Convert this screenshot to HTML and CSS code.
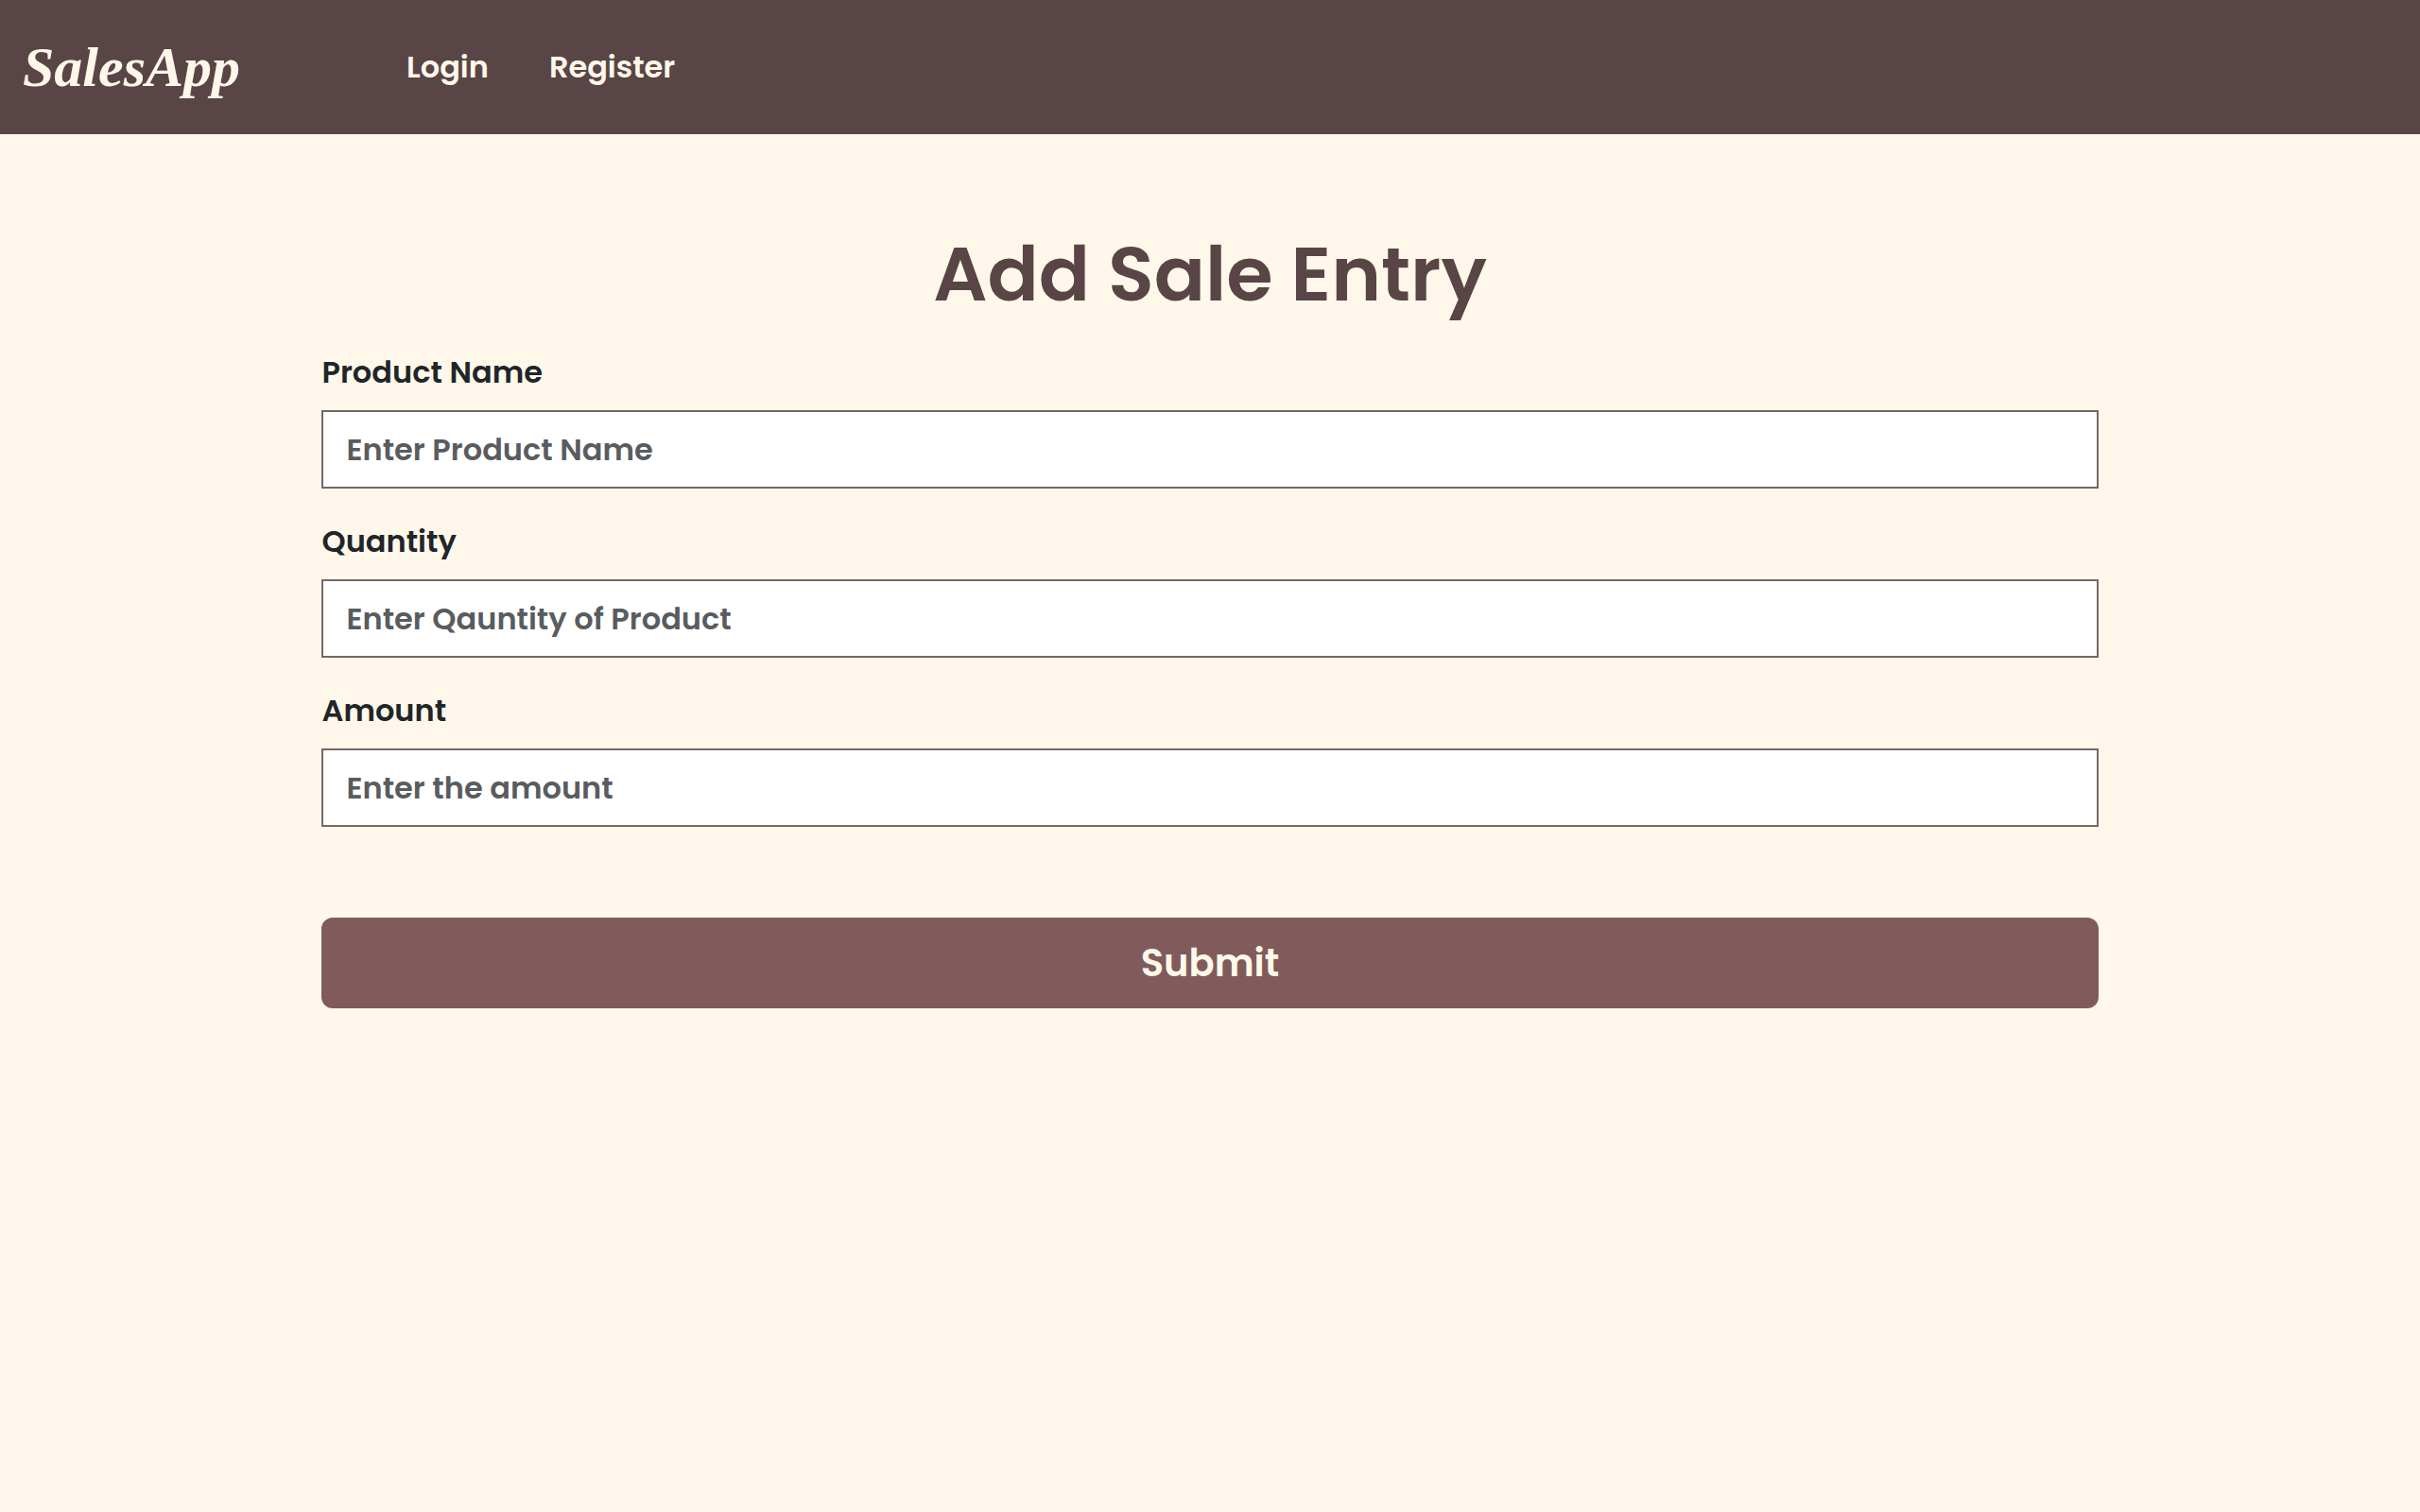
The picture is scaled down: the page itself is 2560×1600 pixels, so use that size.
FILE: index.html
```html
<!DOCTYPE html>
<html lang="en">
<head>
<meta charset="utf-8">
<meta name="viewport" content="width=device-width, initial-scale=1">
<title>SalesApp</title>
<link rel="stylesheet" href="styles.css">
</head>
<body>
<header class="navbar">
  <a class="brand" href="#">SalesApp</a>
  <nav class="nav-links">
    <a class="nav-link" href="#">Login</a>
    <a class="nav-link" href="#">Register</a>
  </nav>
</header>
<main class="container">
  <h1 class="title">Add Sale Entry</h1>
  <form class="form">
    <div class="field">
      <label class="label" for="product">Product Name</label>
      <input class="input" id="product" type="text" placeholder="Enter Product Name">
    </div>
    <div class="field">
      <label class="label" for="quantity">Quantity</label>
      <input class="input" id="quantity" type="text" placeholder="Enter Qauntity of Product">
    </div>
    <div class="field">
      <label class="label" for="amount">Amount</label>
      <input class="input" id="amount" type="text" placeholder="Enter the amount">
    </div>
    <button class="submit" type="submit">Submit</button>
  </form>
</main>
</body>
</html>
```
FILE: styles.css
```css
* {
  box-sizing: border-box;
}

body {
  margin: 0;
  background: #fff8ea;
  color: #212529;
  font-family: Poppins, Inter, sans-serif;
  font-size: 32px;
  font-weight: 600;
  line-height: 48px;
}

.navbar {
  display: flex;
  align-items: center;
  gap: 176px;
  padding: 35px 24px;
  background: #594545;
}

.brand {
  color: #fff8ea;
  font-family: "Liberation Serif", serif;
  font-size: 60px;
  font-style: italic;
  font-weight: 700;
  line-height: 72px;
  text-decoration: none;
}

.nav-links {
  display: flex;
  gap: 64px;
}

.nav-link {
  color: #fff8ea;
  text-decoration: none;
}

.container {
  width: 73.4%;
  margin: 0 auto;
  padding-top: 100px;
}

.title {
  margin: 0 0 32px;
  color: #594545;
  font-size: 80px;
  font-weight: 600;
  line-height: 96px;
  text-align: center;
}

.form {
  display: flex;
  flex-direction: column;
  gap: 32px;
}

.field {
  display: flex;
  flex-direction: column;
  gap: 16px;
}

.input {
  width: 100%;
  height: 83px;
  padding: 0 24px;
  border: 2px solid #776666;
  border-radius: 0;
  background: #fff;
  color: #212529;
  font: inherit;
}

.input::placeholder {
  color: #595c5f;
  opacity: 1;
}

.submit {
  height: 96px;
  margin-top: 64px;
  border: 0;
  border-radius: 12px;
  background: #815b5b;
  color: #fff8ea;
  font: inherit;
  font-size: 40px;
}
```
